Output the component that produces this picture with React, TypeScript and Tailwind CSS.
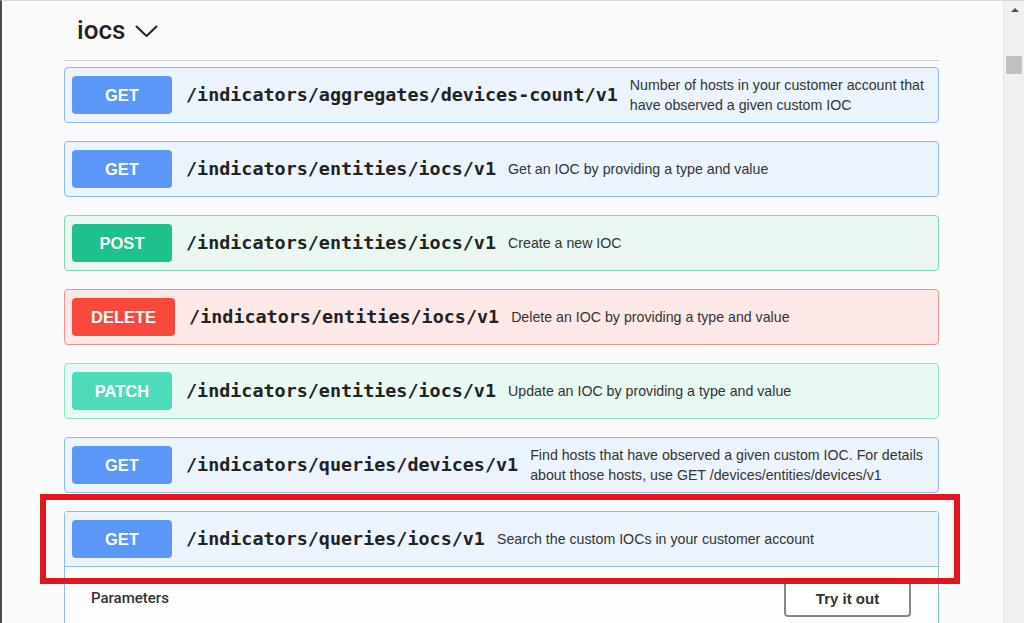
type Op = {
  method: 'GET' | 'POST' | 'DELETE' | 'PATCH';
  path: string;
  summary: string;
};

const ops: Op[] = [
  { method: 'GET', path: '/indicators/aggregates/devices-count/v1', summary: 'Number of hosts in your customer account that have observed a given custom IOC' },
  { method: 'GET', path: '/indicators/entities/iocs/v1', summary: 'Get an IOC by providing a type and value' },
  { method: 'POST', path: '/indicators/entities/iocs/v1', summary: 'Create a new IOC' },
  { method: 'DELETE', path: '/indicators/entities/iocs/v1', summary: 'Delete an IOC by providing a type and value' },
  { method: 'PATCH', path: '/indicators/entities/iocs/v1', summary: 'Update an IOC by providing a type and value' },
  { method: 'GET', path: '/indicators/queries/devices/v1', summary: 'Find hosts that have observed a given custom IOC. For details about those hosts, use GET /devices/entities/devices/v1' },
];

const styles = {
  GET: { row: 'bg-[#ebf3fd] border-[#8cb9f3]', badge: 'bg-[#5a97f6]' },
  POST: { row: 'bg-[#e9f7f0] border-[#7dd8b4]', badge: 'bg-[#1ec08e]' },
  DELETE: { row: 'bg-[#fce9e7] border-[#f29089]', badge: 'bg-[#f9493c]' },
  PATCH: { row: 'bg-[#e8f8f3] border-[#8ae6cd]', badge: 'bg-[#4edbbb]' },
};

function Summary({ op }: { op: Op }) {
  return (
    <div className="flex h-[54px] items-center pl-[7px] pr-[4px]">
      <div className={`flex h-[38px] min-w-[100px] shrink-0 items-center justify-center rounded-[4px] px-[19px] text-[16.5px] font-bold text-white ${styles[op.method].badge}`}>
        {op.method}
      </div>
      <div className="ml-[14px] shrink-0 font-['DejaVu_Sans_Mono',monospace] text-[18.4px] font-bold text-[#222]">
        {op.path}
      </div>
      <div className="ml-[12px] text-[14.2px] leading-[20px] text-[#333]">{op.summary}</div>
    </div>
  );
}

export default function App() {
  return (
    <div className="relative flex h-[623px] w-[1024px] overflow-hidden border-l-2 border-t border-l-[#4b4b4b] border-t-[#d8d8d8] bg-[#fafafa] font-['Liberation_Sans',Arial,sans-serif]">
      <div className="flex-1 pl-[62px]">
        <div className="w-[875px]">
          <div className="flex h-[60px] items-center gap-[10px] border-b border-[#cfcfcf] pl-[13px]">
            <span className="font-['Roboto',sans-serif] text-[26px] font-medium text-[#222]">iocs</span>
            <svg width="23" height="13" viewBox="0 0 23 13" className="mt-[2px]">
              <polyline points="1.5,1.5 11.5,11 21.5,1.5" fill="none" stroke="#222" strokeWidth="2" strokeLinecap="round" strokeLinejoin="round" />
            </svg>
          </div>
          <div className="mt-[6px] flex flex-col gap-[18px]">
            {ops.map((op, i) => (
              <div key={i} className={`rounded-[4px] border ${styles[op.method].row}`}>
                <Summary op={op} />
              </div>
            ))}
            <div className="rounded-t-[4px] border border-b-0 border-[#8cb9f3] bg-[#fcfdff]">
              <div className="border-b border-[#8cb9f3] bg-[#ebf3fd]">
                <Summary op={{ method: 'GET', path: '/indicators/queries/iocs/v1', summary: 'Search the custom IOCs in your customer account' }} />
              </div>
              <div className="flex h-[60px] items-start justify-between pl-[26px] pr-[27px] pt-[14px]">
                <span className="mt-[6px] font-['Roboto',sans-serif] text-[15px] font-medium text-[#333]">Parameters</span>
                <button className="h-[36px] w-[127px] rounded-[4px] border-2 border-[#888] bg-white text-[15px] font-bold text-[#333]">
                  Try it out
                </button>
              </div>
            </div>
          </div>
        </div>
      </div>
      <div className="relative w-[21px] border-l border-[#e6e6e6] bg-[#f1f1f1]">
        <div className="absolute left-[7px] top-[7px] h-0 w-0 border-x-[4px] border-b-[4px] border-x-transparent border-b-[#505050]" />
        <div className="absolute left-[2px] top-[55px] h-[18px] w-[16px] bg-[#c1c1c1]" />
      </div>
      <div className="pointer-events-none absolute left-[38px] top-[493px] h-[90px] w-[920px] border-[6px] border-[#e2161f]" />
    </div>
  );
}
